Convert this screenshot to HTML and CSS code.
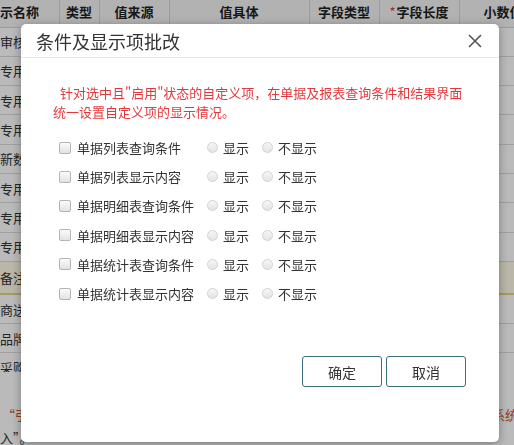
FILE: index.html
```html
<!DOCTYPE html>
<html lang="zh-CN">
<head>
<meta charset="utf-8">
<title>条件及显示项批改</title>
<link rel="stylesheet" href="styles.css">
</head>
<body>
<div class="page">
  <div class="table-wrap">
    <table class="grid">
      <colgroup>
        <col class="c1"><col class="c2"><col class="c3"><col class="c4"><col class="c5"><col class="c6"><col class="c7">
      </colgroup>
      <thead>
        <tr><th class="first">示名称</th><th>类型</th><th>值来源</th><th>值具体</th><th>字段类型</th><th><span class="req">*</span>字段长度</th><th>小数位数</th></tr>
      </thead>
      <tbody>
        <tr><td class="first">审核日期</td><td></td><td></td><td></td><td></td><td></td><td></td></tr>
        <tr><td class="first">专用自定义</td><td></td><td></td><td></td><td></td><td></td><td></td></tr>
        <tr><td class="first">专用自定义</td><td></td><td></td><td></td><td></td><td></td><td></td></tr>
        <tr><td class="first">专用自定义</td><td></td><td></td><td></td><td></td><td></td><td></td></tr>
        <tr><td class="first">新数据项</td><td></td><td></td><td></td><td></td><td></td><td></td></tr>
        <tr><td class="first">专用自定义</td><td></td><td></td><td></td><td></td><td></td><td></td></tr>
        <tr><td class="first">专用自定义</td><td></td><td></td><td></td><td></td><td></td><td></td></tr>
        <tr><td class="first">专用自定义</td><td></td><td></td><td></td><td></td><td></td><td></td></tr>
        <tr class="hl"><td class="first">备注</td><td></td><td></td><td></td><td></td><td></td><td></td></tr>
        <tr><td class="first">商送货地址</td><td></td><td></td><td></td><td></td><td></td><td></td></tr>
        <tr><td class="first">品牌</td><td></td><td></td><td></td><td></td><td></td><td></td></tr>
        <tr><td class="first">采购员</td><td></td><td></td><td></td><td></td><td></td><td></td></tr>
      </tbody>
    </table>
  </div>
  <div class="note">
    <div class="note-line"><span class="lead">“引用档案”的自定义项，值来源为系统档案时，值具体请选择</span><span class="tail">系统</span></div>
    <div class="note-line2">入”。</div>
  </div>
</div>

<div class="mask"></div>

<div class="dialog">
  <div class="dlg-head">
    <span class="dlg-title">条件及显示项批改</span>
    <span class="dlg-close" aria-label="关闭">
      <svg width="14" height="14" viewBox="0 0 14 14"><path d="M1 1 L13 13 M13 1 L1 13" stroke="#555" stroke-width="1.6" fill="none"/></svg>
    </span>
  </div>
  <div class="dlg-body">
    <p class="tip">针对选中且"启用"状态的自定义项，在单据及报表查询条件和结果界面统一设置自定义项的显示情况。</p>
    <div class="opts">
      <label class="opt-name"><input type="checkbox" class="cb"><span>单据列表查询条件</span></label>
      <label class="opt-radio"><input type="radio" class="rd" name="r1"><span>显示</span></label>
      <label class="opt-radio"><input type="radio" class="rd" name="r1"><span>不显示</span></label>

      <label class="opt-name"><input type="checkbox" class="cb"><span>单据列表显示内容</span></label>
      <label class="opt-radio"><input type="radio" class="rd" name="r2"><span>显示</span></label>
      <label class="opt-radio"><input type="radio" class="rd" name="r2"><span>不显示</span></label>

      <label class="opt-name"><input type="checkbox" class="cb"><span>单据明细表查询条件</span></label>
      <label class="opt-radio"><input type="radio" class="rd" name="r3"><span>显示</span></label>
      <label class="opt-radio"><input type="radio" class="rd" name="r3"><span>不显示</span></label>

      <label class="opt-name"><input type="checkbox" class="cb"><span>单据明细表显示内容</span></label>
      <label class="opt-radio"><input type="radio" class="rd" name="r4"><span>显示</span></label>
      <label class="opt-radio"><input type="radio" class="rd" name="r4"><span>不显示</span></label>

      <label class="opt-name"><input type="checkbox" class="cb"><span>单据统计表查询条件</span></label>
      <label class="opt-radio"><input type="radio" class="rd" name="r5"><span>显示</span></label>
      <label class="opt-radio"><input type="radio" class="rd" name="r5"><span>不显示</span></label>

      <label class="opt-name"><input type="checkbox" class="cb"><span>单据统计表显示内容</span></label>
      <label class="opt-radio"><input type="radio" class="rd" name="r6"><span>显示</span></label>
      <label class="opt-radio"><input type="radio" class="rd" name="r6"><span>不显示</span></label>
    </div>
    <div class="actions">
      <button class="btn">确定</button>
      <button class="btn">取消</button>
    </div>
  </div>
</div>
</body>
</html>
```

FILE: styles.css
```css
* { box-sizing: border-box; }
html, body {
  margin: 0;
  padding: 0;
  width: 514px;
  height: 445px;
  overflow: hidden;
  background: #ffffff;
  font-family: "Noto Sans CJK SC", "Noto Sans", "Liberation Sans", sans-serif;
  color: #333;
}
.page { width: 514px; }
.table-wrap {
  height: 372px;
  overflow: hidden;
}
.grid {
  border-collapse: collapse;
  table-layout: fixed;
  width: 560px;
  font-size: 13px;
}
.grid col.c1 { width: 59px; }
.grid col.c2 { width: 40px; }
.grid col.c3 { width: 70px; }
.grid col.c4 { width: 140px; }
.grid col.c5 { width: 70px; }
.grid col.c6 { width: 80px; }
.grid col.c7 { width: 101px; }
.grid th {
  height: 27px;
  padding: 0 0 4px;
  font-weight: bold;
  color: #222;
  background: #f4f4f4;
  border-right: 1px solid #d6d6d6;
  border-bottom: 1px solid #d6d6d6;
  white-space: nowrap;
  overflow: hidden;
  text-align: center;
}
.grid th.first { text-align: left; }
.req { color: #e4393c; font-weight: normal; margin-right: 1px; }
.grid td {
  height: 29.3px;
  padding: 0;
  border-right: 1px solid #dcdcdc;
  border-bottom: 1px solid #dcdcdc;
  white-space: nowrap;
  overflow: hidden;
}
.grid td.first { padding-left: 0; }
.grid tr.hl td {
  height: 33px;
  background: #fffbe6;
  border-bottom: 2px solid #e3d28a;
}
.note {
  padding-top: 31px;
  font-size: 13px;
  line-height: 23px;
}
.note-line {
  display: flex;
  justify-content: space-between;
  color: #c95040;
  padding-left: 2px;
  white-space: nowrap;
  overflow: hidden;
}
.note-line .tail { flex: none; margin-right: -4px; }
.note-line2 { color: #333; }

.mask {
  position: fixed;
  inset: 0;
  background: rgba(0, 0, 0, 0.27);
}

.dialog {
  position: absolute;
  left: 21px;
  top: 24px;
  width: 478px;
  height: 418px;
  background: #fff;
  border-radius: 5px;
  box-shadow: 0 2px 10px rgba(0, 0, 0, 0.35);
  display: flex;
  flex-direction: column;
}
.dlg-head {
  height: 34px;
  display: flex;
  align-items: center;
  justify-content: space-between;
  padding: 0 17px 0 15px;
  border-bottom: 1px solid #e6e6e6;
}
.dlg-title {
  font-size: 18px;
  color: #333;
  line-height: 24px;
}
.dlg-close { display: flex; width: 14px; height: 14px; }
.dlg-body {
  flex: 1;
  display: flex;
  flex-direction: column;
  padding: 25px 33px 0 32px;
}
.tip {
  margin: 0;
  font-size: 13px;
  line-height: 19px;
  color: #e4393c;
  text-indent: 7px;
}
.opts {
  margin-top: 12px;
  padding-left: 6px;
  display: grid;
  grid-template-columns: 135px auto 1fr;
  grid-auto-rows: 29.2px;
  column-gap: 13px;
  align-items: center;
  font-size: 13px;
  color: #333;
}
.opt-name, .opt-radio {
  display: flex;
  align-items: center;
  white-space: nowrap;
}
.opt-name { gap: 6px; }
.opt-radio { gap: 5px; }
.cb {
  -webkit-appearance: none;
  appearance: none;
  margin: 0;
  width: 12px;
  height: 12px;
  border: 1px solid #b4b4b4;
  border-radius: 2px;
  background: linear-gradient(#fbfbfb, #e2e2e2);
  flex: none;
}
.rd {
  -webkit-appearance: none;
  appearance: none;
  margin: 0;
  width: 11px;
  height: 11px;
  border: 1px solid #d2d2d2;
  border-radius: 50%;
  background: linear-gradient(#f6f6f6, #e4e4e4);
  flex: none;
}
.actions {
  margin-top: 48px;
  display: flex;
  justify-content: flex-end;
  gap: 4px;
}
.btn {
  width: 80px;
  height: 31px;
  border: 1px solid #3b6e7e;
  border-radius: 3px;
  background: #fff;
  font-family: inherit;
  font-size: 14px;
  color: #333;
  padding: 0;
}
```
